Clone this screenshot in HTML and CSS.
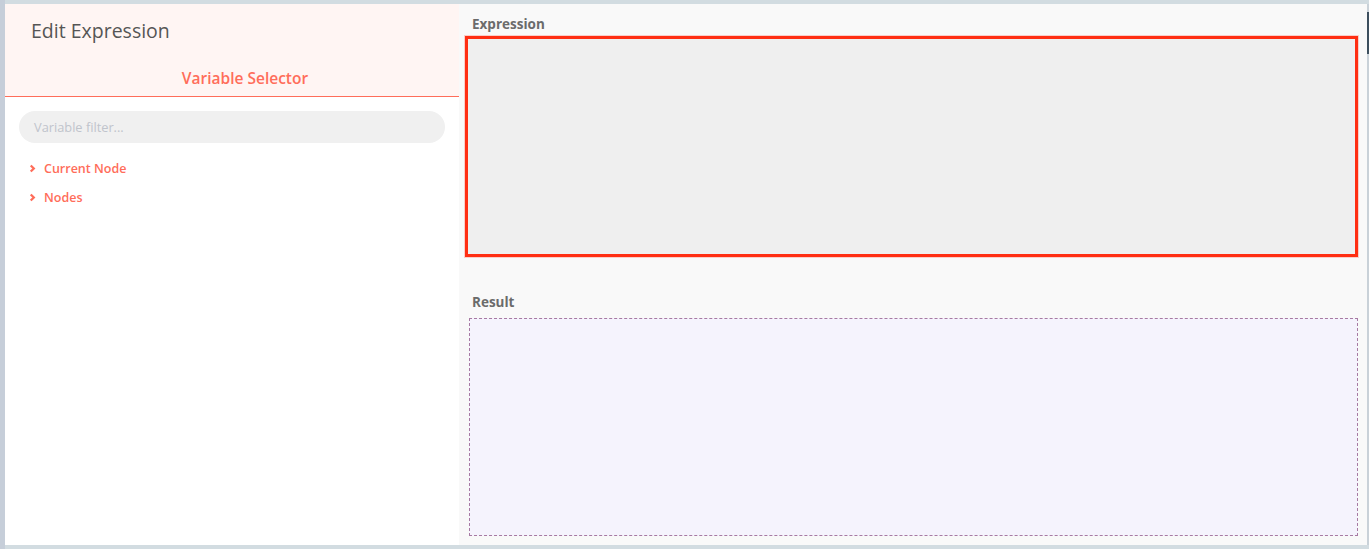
FILE: index.html
```html
<!DOCTYPE html>
<html lang="en">
<head>
<meta charset="utf-8">
<title>Edit Expression</title>
<link rel="stylesheet" href="styles.css">
</head>
<body>
<div class="page">
  <div class="edge-left"></div>
  <div class="dialog">
    <aside class="selector">
      <header class="selector-head">
        <h1 class="title">Edit Expression</h1>
        <div class="tab">Variable Selector</div>
      </header>
      <div class="filter">Variable filter...</div>
      <ul class="tree">
        <li class="tree-item">
          <svg class="chev" viewBox="0 0 8 10" width="7" height="9"><path d="M2 1.5 L5.5 5 L2 8.5" fill="none" stroke="#ff6d5a" stroke-width="2.6"/></svg>
          <span>Current Node</span>
        </li>
        <li class="tree-item">
          <svg class="chev" viewBox="0 0 8 10" width="7" height="9"><path d="M2 1.5 L5.5 5 L2 8.5" fill="none" stroke="#ff6d5a" stroke-width="2.6"/></svg>
          <span>Nodes</span>
        </li>
      </ul>
    </aside>
    <main class="editor">
      <div class="label">Expression</div>
      <div class="expr-box"></div>
      <div class="label result-label">Result</div>
      <div class="result-box"></div>
    </main>
  </div>
  <div class="edge-right"><div class="thumb"></div></div>
</div>
</body>
</html>
```

FILE: styles.css
```css
* { box-sizing: border-box; }
html, body {
  margin: 0;
  padding: 0;
  height: 549px;
  overflow: hidden;
  background: #d2dce1;
  font-family: "Open Sans", "Noto Sans", sans-serif;
}
.page {
  display: flex;
  height: 549px;
  padding: 4px 0 4px 0;
  background: #d2dce1;
}
.edge-left {
  width: 5px;
  margin-top: -4px;
  margin-bottom: -4px;
  background: #c6ced9;
}
.edge-right {
  width: 2px;
  padding-top: 8px;
  background: #c9d1d8;
}
.thumb {
  width: 2px;
  height: 42px;
  background: #3d4f5e;
}
.dialog {
  flex: 1;
  display: flex;
  background: #fff;
}
.selector {
  width: 454px;
  background: #fff;
  display: flex;
  flex-direction: column;
}
.selector-head {
  background: #fff5f3;
  height: 93px;
  border-bottom: 1px solid #ff6d5a;
  padding: 15px 0 0 26px;
}
.title {
  margin: 0;
  font-size: 19.5px;
  line-height: 24px;
  font-weight: 500;
  color: #555;
}
.tab {
  margin-top: 25px;
  text-align: center;
  font-size: 15.5px;
  line-height: 20px;
  font-weight: 600;
  color: #ff6d5a;
}
.filter {
  margin: 14px 14px 0 14px;
  height: 32px;
  border-radius: 16px;
  background: #f0f0f0;
  padding-left: 15px;
  font-size: 12.8px;
  line-height: 32px;
  color: #c0c4cc;
}
.tree {
  list-style: none;
  margin: 11px 0 0 0;
  padding: 0 0 0 24px;
}
.tree-item {
  display: flex;
  align-items: center;
  gap: 8px;
  height: 29px;
  font-size: 12.5px;
  font-weight: 600;
  color: #ff6d5a;
}
.chev { flex: none; }
.editor {
  flex: 1;
  background: #f9f9f9;
  padding: 10px 9px 9px 6px;
  display: flex;
  flex-direction: column;
}
.label {
  padding-left: 7px;
  font-size: 13.5px;
  line-height: 20px;
  font-weight: 700;
  color: #6b6b6b;
}
.expr-box {
  margin-top: 2px;
  height: 221px;
  border: 3px solid #ff2e12;
  box-shadow: 0 0 0 1px rgba(255, 80, 60, 0.25);
  background: #efefef;
}
.result-label {
  margin-top: 35px;
}
.result-box {
  flex: 1;
  margin: 6px 0 0 4px;
  border: 1px dashed #a77aa3;
  background: #f5f3fd;
}
```
